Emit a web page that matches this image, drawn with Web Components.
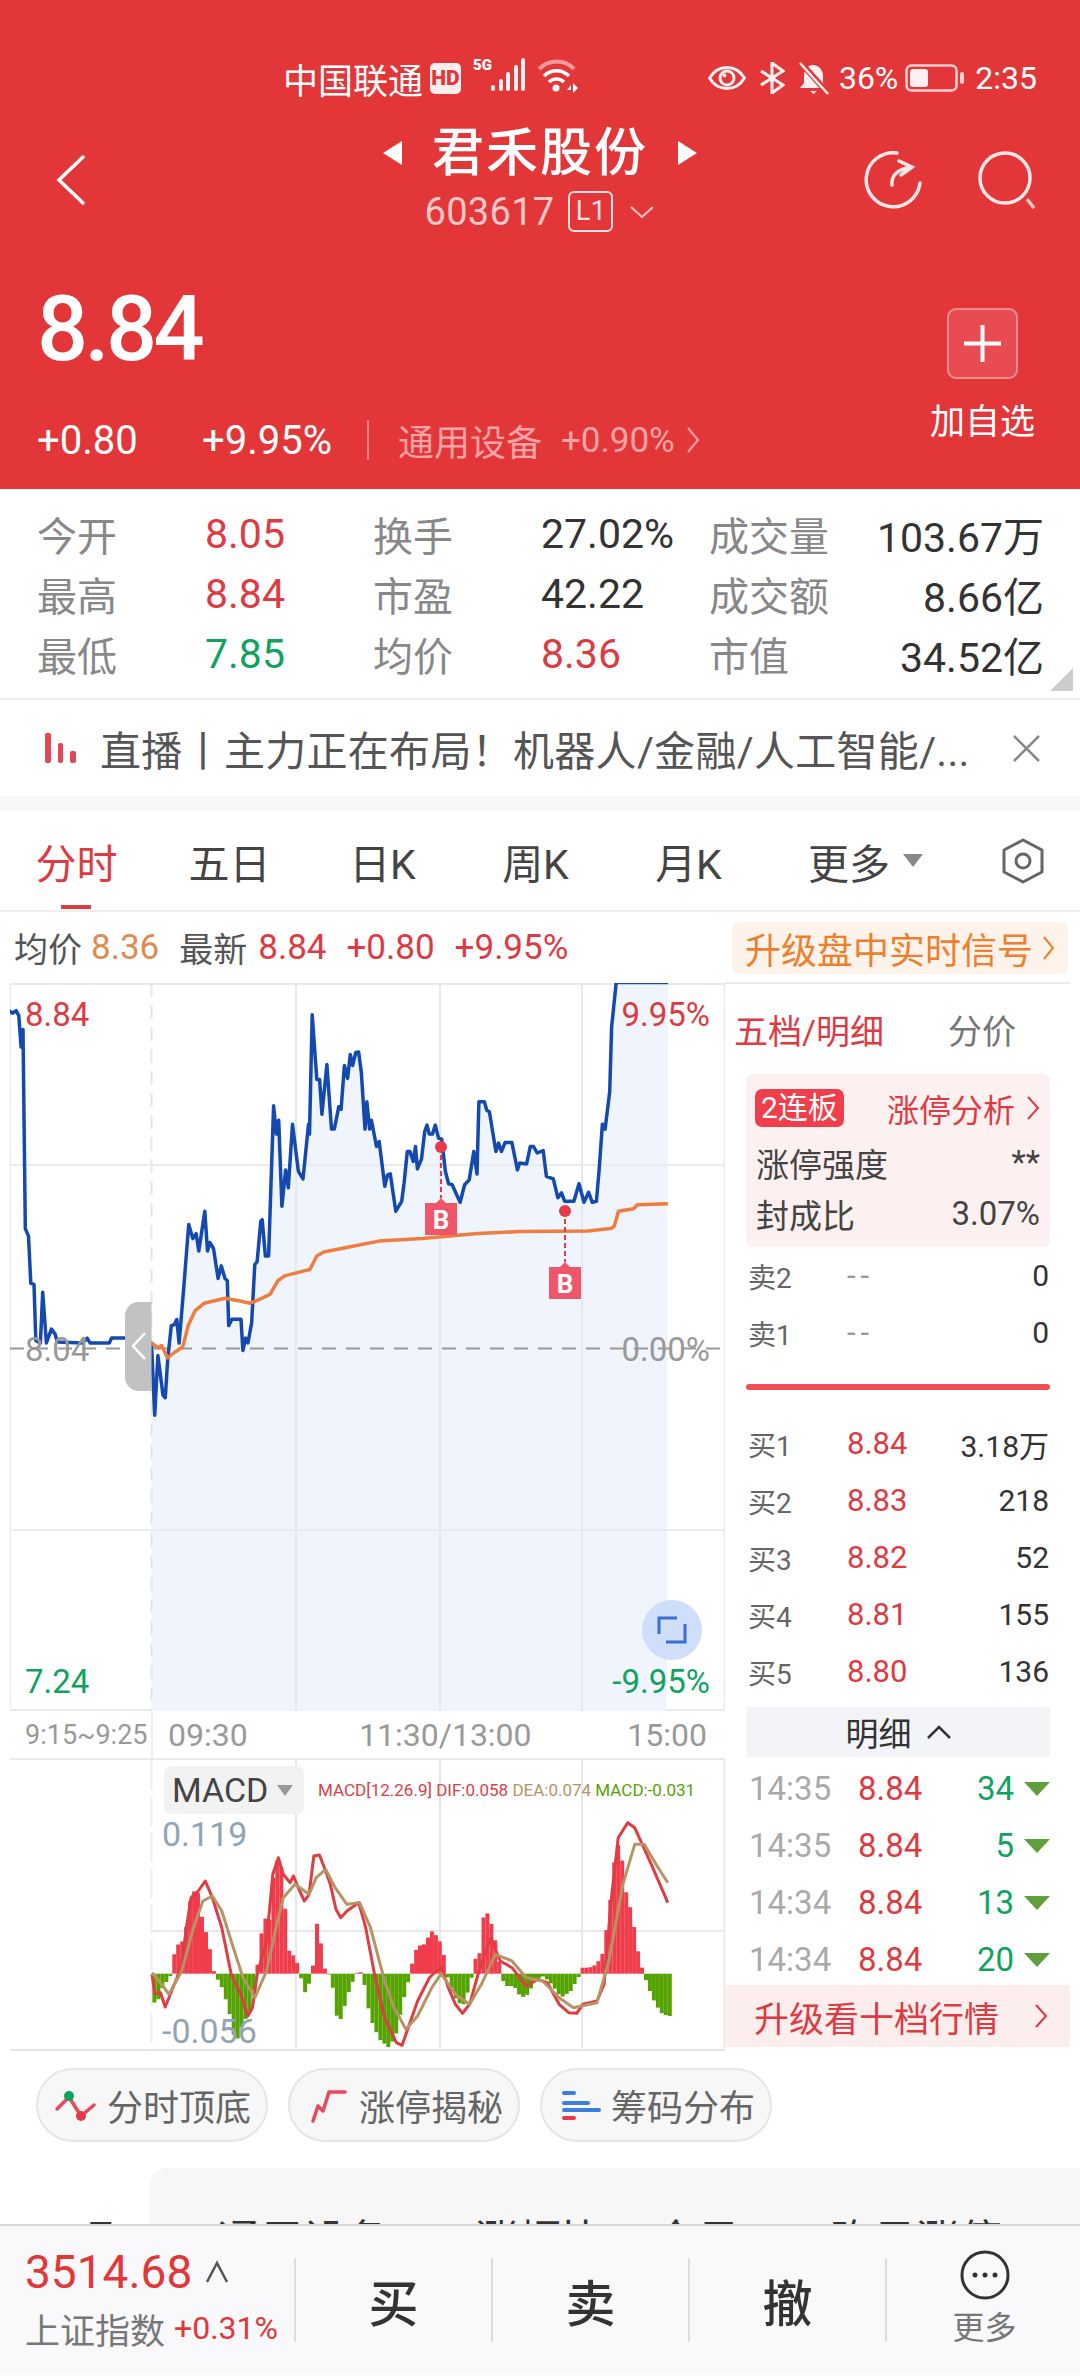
<!DOCTYPE html>
<html lang="zh">
<head>
<meta charset="utf-8">
<title>君禾股份</title>
<style>
html,body{margin:0;padding:0;background:#fff;}
body{width:1080px;height:2376px;overflow:hidden;display:flex;flex-direction:column;font-family:Roboto,"Noto Sans CJK SC",sans-serif;color:#333;}
</style>
</head>
<body>
<stock-header></stock-header>
<stat-grid></stat-grid>
<ad-strip></ad-strip>
<tab-row></tab-row>
<info-row></info-row>
<chart-section></chart-section>
<chip-row>
  <tool-chip icon="turn">分时顶底</tool-chip>
  <tool-chip icon="limit">涨停揭秘</tool-chip>
  <tool-chip icon="chips">筹码分布</tool-chip>
</chip-row>
<peek-card></peek-card>
<bottom-bar></bottom-bar>
<script>
const RED = "#dd3a42", GREEN = "#10a35f";

class Base extends HTMLElement {
    connectedCallback() {
        if (this.shadowRoot) return;
        let root = this.attachShadow({mode: "open"});
        root.innerHTML = `<style>${ this.css() }</style>${ this.html() }`;
    }
    css() { return ":host{display:block}"; }
    html() { return "<slot></slot>"; }
}

class StockHeader extends Base {
    css() { return `
        :host{display:block;height:489px;background:#e23638;color:#fff;}
        .status{height:120px;box-sizing:border-box;padding:36px 43px 0 283px;display:flex;align-items:center;font-size:35px;}
        .status svg{display:block;flex:none;}
        .hd{width:31px;height:31px;background:#fdeeee;border-radius:5px;color:#e23638;font-size:21px;font-weight:900;display:flex;align-items:center;justify-content:center;margin-left:7px;}
        .g5{font-size:15px;font-weight:900;width:18px;align-self:flex-start;margin:20px 0 0 12px;}
        .right{margin-left:auto;display:flex;align-items:center;font-size:32px;}
        .nav{height:120px;display:flex;align-items:center;}
        .side{width:240px;flex:none;display:flex;box-sizing:border-box;}
        .side.l{padding-left:56px;}
        .side.r{justify-content:flex-end;padding-right:43px;gap:54px;}
        .mid{flex:1;display:flex;flex-direction:column;align-items:center;}
        .title{display:flex;align-items:center;font-size:52px;font-weight:500;line-height:75px;margin-top:-12px;letter-spacing:2px;gap:30px;}
        .tri{width:0;height:0;border:12px solid transparent;}
        .tri.a{border-left:0;border-right:19px solid #fff;}
        .tri.b{border-right:0;border-left:19px solid #fff;}
        .code{display:flex;align-items:center;color:#fbc8c8;font-size:38px;line-height:42px;letter-spacing:.3px;}
        .l1{border:2px solid #fde0e0;border-radius:6px;width:41px;height:37px;margin-left:14px;font-size:27px;line-height:37px;text-align:center;color:#fde0e0;}
        .quote{height:249px;display:flex;justify-content:space-between;}
        .price{font-size:90px;line-height:90px;font-weight:500;margin:45px 0 0 37px;letter-spacing:-3.6px;}
        .chg{display:flex;align-items:center;height:50px;margin:40px 0 0 37px;font-size:40px;}
        .chg .a{width:165px;}
        .chg .b{width:165px;}
        .chg i{width:2px;height:40px;background:#ee8487;margin-right:29px;}
        .chg .ind{font-size:36px;color:#fba3a5;width:163px;}
        .chg .pct{font-size:35px;color:#fba3a5;margin-right:11px;}
        .add{display:flex;flex-direction:column;align-items:center;padding-right:45px;}
        .btn{width:71px;height:71px;box-sizing:border-box;margin-top:68px;background:#e94c50;border:2px solid #f08d8e;border-radius:9px;display:flex;align-items:center;justify-content:center;}
        .add span{font-size:35px;line-height:46px;margin-top:21px;}
    `; }
    html() { return `
        <div class="status">
            <span>中国联通</span><span class="hd">HD</span><span class="g5">5G</span>
            <svg width="36" height="40" style="margin-top:-8px" viewBox="0 0 36 40"><g stroke="#fdeeee" stroke-width="4" stroke-linecap="round"><path d="M2 35V33M10 35V27M17 35V20M25 35V13M32 35V6"/></g></svg>
            <svg width="42" height="36" style="margin:-4px 0 0 10px" viewBox="0 0 42 36" fill="none"><path d="M2 11C12 1 28 1 37 11" stroke="#f59a9c" stroke-width="4"/><path d="M7 18C14 11 25 11 32 18" stroke="#fff" stroke-width="3.5"/><path d="M12 24C16 20 23 20 27 24" stroke="#fff" stroke-width="3.5"/><circle cx="19" cy="30" r="3.5" fill="#fff"/><path d="M30 32L34 27V32ZM36 25V35L41 30Z" fill="#fff"/></svg>
            <div class="right">
                <svg width="38" height="26" viewBox="0 0 38 26" fill="none" stroke="#fdf0f0" stroke-width="3"><path d="M1.5 13C10 -1 28 -1 36.5 13C28 27 10 27 1.5 13Z"/><circle cx="19" cy="13" r="7"/><circle cx="16.500" cy="10.500" r="2" fill="#fdf0f0" stroke="none"/></svg>
                <svg width="26" height="32" style="margin-left:13px" viewBox="0 0 26 32" fill="none" stroke="#fdf0f0" stroke-width="3"><path d="M2 9L24 23L13 31V1L24 9L2 23"/></svg>
                <svg width="31" height="33" style="margin-left:13px" viewBox="0 0 31 33"><path d="M15 3C21 3 25 8 25 14V21L29 26H2L6 21V14C6 8 9 3 15 3Z" fill="#fdf0f0"/><path d="M12 29H19L15.500 32Z" fill="#fdf0f0"/><path d="M2 0L30 31" stroke="#e23638" stroke-width="6"/><path d="M2 1L30 32" stroke="#fdf0f0" stroke-width="2.500"/></svg>
                <span style="margin-left:10px">36%</span>
                <svg width="59" height="28" style="margin-left:7px" viewBox="0 0 59 28"><rect x="1.500" y="1.500" width="50" height="25" rx="5" fill="none" stroke="#fbd0d0" stroke-width="2.500"/><rect x="5" y="5" width="18" height="18" rx="3" fill="#fdf0f0"/><rect x="55" y="8" width="4" height="12" rx="2" fill="#fbd0d0"/></svg>
                <span style="margin-left:11px">2:35</span>
            </div>
        </div>
        <div class="nav">
            <div class="side l"><svg width="30" height="50" viewBox="0 0 30 50" fill="none" stroke="#fff" stroke-width="3.500" stroke-linecap="round"><path d="M27 2L3 25L27 48"/></svg></div>
            <div class="mid">
                <div class="title"><span class="tri a"></span><span>君禾股份</span><span class="tri b"></span></div>
                <div class="code"><span>603617</span><span class="l1">L1</span>
                    <svg width="26" height="14" style="margin-left:16px" viewBox="0 0 26 14" fill="none" stroke="#fbc8c8" stroke-width="2"><path d="M2 2L13 12L24 2"/></svg></div>
            </div>
            <div class="side r">
                <svg width="60" height="60" viewBox="0 0 60 60" fill="none" stroke="#fde6e6" stroke-width="3.500" stroke-linecap="round"><path d="M34 3A27 27 0 1 0 57 33"/><path d="M29 35C28 27 33 19 49 17M36 11L49 17L38 25"/></svg>
                <svg width="60" height="60" viewBox="0 0 60 60" fill="none"><circle cx="28" cy="28" r="25" stroke="#fde6e6" stroke-width="3.500"/><path d="M50 49L57 58" stroke="#fbc8c8" stroke-width="3.500"/></svg>
            </div>
        </div>
        <div class="quote">
            <div>
                <div class="price">8.84</div>
                <div class="chg"><span class="a">+0.80</span><span class="b">+9.95%</span><i></i><span class="ind">通用设备</span><span class="pct">+0.90%</span>
                <svg width="14" height="28" viewBox="0 0 14 28" fill="none" stroke="#fba3a5" stroke-width="2"><path d="M2 2L12 14L2 26"/></svg></div>
            </div>
            <div class="add">
                <div class="btn"><svg width="37" height="37" viewBox="0 0 37 37" stroke="#fff" stroke-width="4"><path d="M18.500 0V37M0 18.500H37"/></svg></div>
                <span>加自选</span>
            </div>
        </div>
    `; }
}

class StatGrid extends Base {
    css() { return `
        :host{display:block;position:relative;height:211px;box-sizing:border-box;padding:15px 36px 0 37px;border-bottom:2px solid #eee;background:#fff;}
        .g{display:grid;grid-template-columns:168px 168px 168px 168px 140px 1fr;grid-auto-rows:60px;align-items:center;font-size:41px;white-space:nowrap;}
        .k{color:#888;font-size:40px;} .v{color:#333;} .red{color:${ RED };} .green{color:${ GREEN };}
        .end{text-align:right;}
        .corner{position:absolute;right:7px;bottom:7px;width:0;height:0;border-left:23px solid transparent;border-bottom:23px solid #ccc;}
    `; }
    html() {
        let rows = [
            ["今开", "8.05", "red", "换手", "27.02%", "v", "成交量", "103.67万"],
            ["最高", "8.84", "red", "市盈", "42.22", "v", "成交额", "8.66亿"],
            ["最低", "7.85", "green", "均价", "8.36", "red", "市值", "34.52亿"]
        ];
        return `<div class="g">${ rows.map(r => `
            <span class="k">${ r[0] }</span><span class="${ r[2] }">${ r[1] }</span>
            <span class="k">${ r[3] }</span><span class="${ r[5] }">${ r[4] }</span>
            <span class="k">${ r[6] }</span><span class="v end">${ r[7] }</span>`).join("") }</div>
            <div class="corner"></div>`;
    }
}

class AdStrip extends Base {
    css() { return `
        :host{display:flex;align-items:center;height:111px;box-sizing:border-box;border-bottom:15px solid #f7f7f7;padding:0 40px 0 45px;background:#fff;}
        span{font-size:41px;letter-spacing:.3px;color:#555;margin-left:23px;flex:1;white-space:nowrap;}
    `; }
    html() { return `
        <svg width="32" height="30" viewBox="0 0 32 30" fill="#e04855"><rect width="6" height="30" rx="2"/><rect x="13" y="10" width="5" height="20" rx="2"/><rect x="25" y="18" width="6" height="12" rx="2"/></svg>
        <span>直播丨主力正在布局！机器人/金融/人工智能/...</span>
        <svg width="27" height="27" viewBox="0 0 27 27" fill="none" stroke="#888" stroke-width="2.500"><path d="M1 1L26 26M26 1L1 26"/></svg>
    `; }
}

class TabRow extends Base {
    css() { return `
        :host{display:grid;grid-template-columns:repeat(6,153px) 1fr;align-items:center;height:101px;box-sizing:border-box;border-bottom:2px solid #eee;font-size:41px;color:#444;background:#fff;position:relative;}
        span{text-align:center;}
        .on{color:${ RED };}
        .on::after{content:"";position:absolute;left:61px;bottom:1px;width:30px;height:4px;background:${ RED };}
        .more{display:flex;align-items:center;justify-content:center;margin-left:24px;width:153px;gap:13px;}
        .more i{width:0;height:0;border:10px solid transparent;border-top:13px solid #888;border-bottom:0;}
        svg{justify-self:end;margin-right:35px;}
    `; }
    html() { return `
        <span class="on">分时</span><span>五日</span><span>日K</span><span>周K</span><span>月K</span>
        <span class="more">更多<i></i></span>
        <svg width="44" height="46" viewBox="0 0 44 46" fill="none" stroke="#666" stroke-width="3"><path d="M22 2L41 12V34L22 44L3 34V12Z" stroke-linejoin="round"/><circle cx="22" cy="23" r="7"/></svg>
    `; }
}

class InfoRow extends Base {
    css() { return `
        :host{display:flex;align-items:center;height:71px;padding:0 12px 0 14px;font-size:34px;color:#555;background:#fff;}
        .o{color:#e08a4f;font-size:35px;margin:0 20px 0 9px;}
        .r{color:${ RED };font-size:35px;margin-left:20px;}
        .r.f{margin-left:11px;}
        .btn{margin-left:auto;width:336px;height:52px;box-sizing:border-box;padding-left:13px;background:#fdf3ea;border-radius:6px;color:#ee7f2d;font-size:36px;display:flex;align-items:center;gap:9px;}
    `; }
    html() { return `
        <span>均价</span><span class="o">8.36</span><span>最新</span>
        <span class="r f">8.84</span><span class="r">+0.80</span><span class="r">+9.95%</span>
        <div class="btn"><span>升级盘中实时信号</span><svg width="13" height="26" viewBox="0 0 13 26" fill="none" stroke="#ee7f2d" stroke-width="2"><path d="M2 2L11 13L2 24"/></svg></div>
    `; }
}

const pts = s => s.trim().split(/\s*;\s*/).map(p => p.split(",").map(Number));

class MinuteChart extends Base {
    css() { return `
        :host{display:block;position:relative;height:728px;border-bottom:2px solid #eaeaea;box-sizing:border-box;font-size:33px;}
        svg{display:block;position:absolute;left:0;top:0;}
        span{position:absolute;line-height:36px;}
        .lf{left:15px;} .rt{right:15px;}
    `; }
    html() {
        let X = x => (x / 2.178 - 10).toFixed(1), Y = y => (960 + y / 2.0103 - 983).toFixed(1);
        let line = a => a.map(p => X(p[0]) + "," + Y(p[1])).join(" ");
        let blue = pts(`20,102;27,107;35,102;41,112;46,175;50,140;55,540;62,555;67,650;74,652;78,765;88,770;93,668;101,770;112,742;120,752;125,768;180,770;190,760;196,770;238,770;243,760;300,760;305,770;330,770;337,915;344,795;355,875;360,880;365,805;373,735;380,733;385,723;390,770;400,660;411,532;420,560;427,550;433,585;446,505;452,585;457,568;465,580;475,640;482,615;490,640;495,645;498,735;505,722;525,722;529,785;535,760;540,770;548,730;555,612;560,607;568,525;571,522;578,595;585,595;596,293;602,350;607,322;614,495;622,422;628,458;637,330;650,425;660,440;672,330;674,350;680,110;690,240;696,240;701,310;712,210;722,340;728,340;738,295;743,300;750,212;757,238;763,190;768,212;775,186;781,185;787,225;795,340;799,285;805,340;809,322;820,375;826,365;838,455;844,432;850,430;862,505;875,485;880,450;887,385;893,385;900,405;905,375;909,420;918,400;925,345;930,332;935,350;942,350;948,332;955,358;962,360;970,425;977,450;985,452;1002,487;1012,452;1022,442;1032,385;1039,430;1043,285;1055,285;1060,302;1066,305;1080,385;1086,368;1092,385;1100,367;1115,367;1127,422;1132,408;1147,410;1155,375;1162,375;1170,388;1183,383;1190,435;1205,440;1215,478;1223,468;1230,485;1250,485;1261,450;1272,487;1282,467;1290,487;1299,485;1305,420;1312,330;1318,340;1328,265;1332,135;1342,45;1455,45`);
        let orange = pts(`330,770;345,780;352,775;365,800;378,790;398,778;410,735;425,705;445,690;490,680;520,685;545,690;565,682;588,672;605,645;620,635;675,622;690,595;705,587;760,577;825,565;920,560;1040,550;1130,546;1280,545;1330,540;1338,535;1347,505;1380,500;1388,492;1455,490`);
        let fill = blue.filter(p => p[0] >= 330);
        let marker = (x, dotY, boxY) => `
            <path d="M${ x - 10 } ${ dotY }V${ boxY }" stroke="#e8394a" stroke-width="2" stroke-dasharray="5 3"/>
            <circle cx="${ x - 10 }" cy="${ dotY }" r="6" fill="#e8394a"/>
            <path d="M${ x - 26 } ${ boxY + 5 }H${ x - 15 }L${ x - 10 } ${ boxY }L${ x - 5 } ${ boxY + 5 }H${ x + 6 }V${ boxY + 37 }H${ x - 26 }Z" fill="#f0566a"/>
            <text x="${ x - 10 }" y="${ boxY + 31 }" text-anchor="middle" font-size="26" font-weight="700" fill="#fff">B</text>`;
        return `
        <svg width="715" height="728" viewBox="0 0 715 728" fill="none">
            <path d="M0 1H715M0 727H715" stroke="#eaeaea" stroke-width="2"/>
            <path d="M0 0V728M714.500 0V728" stroke="#eaeaea" stroke-width="2"/>
            <polygon points="${ line(fill) } ${ X(1452) },${ Y(1510) } ${ X(330) },${ Y(1510) }" fill="#eff4fd"/>
            <path d="M141.500 0V728" stroke="#e6e6e6" stroke-width="2" stroke-dasharray="14 8"/>
            <path d="M0 182H715M0 547H715" stroke="#e9ebef" stroke-width="2"/>
            <path d="M286 0V728M430 0V728M572 0V728" stroke="#e4e8f0" stroke-width="2"/>
            <path d="M0 365.500H715" stroke="#999" stroke-width="2" stroke-dasharray="14 10"/>
            <polyline points="${ line(blue) }" stroke="#1449b0" stroke-width="3.500" stroke-linejoin="round"/>
            <polyline points="${ line(orange) }" stroke="#ee7d3f" stroke-width="3.500" stroke-linejoin="round"/>
            ${ marker(441, 164, 215) }
            ${ marker(565, 228, 279) }
            <path d="M141.500 319H129A14 14 0 0 0 115 333V394A14 14 0 0 0 129 408H141.500Z" fill="#c2c2c2"/>
            <path d="M135 350L123 363L135 376" stroke="#fff" stroke-width="2.500"/>
            <circle cx="662" cy="647" r="30" fill="#cfdffa"/>
            <path d="M649 651V635H667M675 641V659H656" stroke="#3a6fd8" stroke-width="3"/>
        </svg>
        <span class="lf" style="top:14px;color:${ RED }">8.84</span>
        <span class="rt" style="top:14px;color:${ RED }">9.95%</span>
        <span class="lf" style="top:349px;color:#999">8.04</span>
        <span class="rt" style="top:349px;color:#999">0.00%</span>
        <span class="lf" style="top:681px;color:${ GREEN }">7.24</span>
        <span class="rt" style="top:681px;color:${ GREEN }">-9.95%</span>`;
    }
}

class AxisRow extends Base {
    css() { return `
        :host{display:flex;align-items:center;height:47px;padding:0 18px 0 15px;font-size:32px;color:#999;position:relative;border-bottom:2px solid #eaeaea;}
        .a{width:143px;font-size:27px;} .b{width:191px;}
        .c{flex:1;}
        :host::before{content:"";position:absolute;left:141px;top:0;bottom:0;width:2px;background:#eee;}
    `; }
    html() { return `<span class="a">9:15~9:25</span><span class="b">09:30</span><span class="c">11:30/13:00</span><span>15:00</span>`; }
}

class MacdChart extends Base {
    css() { return `
        :host{display:block;position:relative;height:291px;border-bottom:2px solid #e4e4e4;box-sizing:border-box;}
        svg{display:block;position:absolute;left:0;top:0;}
        .btn{position:absolute;left:154px;top:6px;width:140px;height:48px;background:#f2f2f2;border-radius:7px;display:flex;align-items:center;box-sizing:border-box;padding-left:8px;font-size:34px;color:#444;}
        .btn i{width:0;height:0;margin-left:9px;border:8px solid transparent;border-top:11px solid #999;border-bottom:0;}
        .leg{position:absolute;left:308px;top:20px;line-height:20px;font-size:17px;white-space:nowrap;}
        .val{position:absolute;left:152px;font-size:34px;line-height:40px;color:#8fa5b5;}
    `; }
    html() {
        let X = x => x / 2.119 - 10, Y = y => 1700 + y / 3 - 1759;
        let env = pts(`322,905;330,900;340,860;360,818;365,760;375,725;385,720;395,640;402,565;410,575;418,575;424,650;430,680;440,740;450,818;455,830;465,855;480,920;495,1030;510,970;525,930;538,830;545,750;555,640;565,680;578,485;590,470;600,620;610,770;620,760;632,818;640,880;650,850;658,825;662,700;668,665;675,720;685,810;692,818;700,850;710,950;720,955;730,890;745,835;750,818;757,808;762,818;768,850;780,950;800,1015;820,1040;835,1000;850,900;865,820;870,780;880,735;895,730;910,690;925,710;935,750;942,818;950,850;965,905;980,910;995,830;1000,770;1010,780;1020,650;1028,635;1040,680;1050,750;1058,818;1065,855;1085,855;1100,890;1115,880;1130,835;1148,825;1165,850;1185,890;1205,870;1225,820;1230,800;1245,800;1260,790;1272,760;1285,650;1300,450;1310,420;1320,560;1335,640;1350,770;1360,818;1370,860;1385,910;1400,940;1415,945`);
        let at = x => {
            for (let i = 1; i < env.length; i++) {
                if (x <= env[i][0]) {
                    let a = env[i - 1], b = env[i];
                    return a[1] + (b[1] - a[1]) * (x - a[0]) / (b[0] - a[0]);
                }
            }
            return env[env.length - 1][1];
        };
        let bars = "";
        for (let x = 323; x < 1416; x += 8.4) {
            let v = at(x), y0 = Y(818), y1 = Y(v);
            bars += `<rect x="${ X(x).toFixed(1) }" width="4" y="${ Math.min(y0, y1).toFixed(1) }" height="${ Math.abs(y1 - y0).toFixed(1) }" fill="${ v < 818 ? "#f13c4b" : "#55a300" }"/>`;
        }
        let dif = pts(`322,820;328,878;340,875;350,918;375,830;385,790;395,680;405,590;420,570;435,540;450,590;470,680;490,820;510,880;525,945;535,920;545,820;565,720;578,520;590,470;600,520;615,545;622,525;635,570;645,600;655,580;665,465;677,462;690,510;700,550;712,625;722,650;735,630;760,605;775,680;795,830;815,950;840,1025;852,1033;865,980;885,900;910,830;935,795;950,860;965,910;980,937;995,910;1015,810;1040,710;1060,780;1085,800;1115,855;1140,835;1160,845;1185,910;1205,935;1222,937;1235,910;1265,900;1280,850;1295,600;1310,410;1330,365;1345,380;1380,490;1415,605`);
        let dea = pts(`322,815;340,845;358,880;385,810;410,680;430,600;450,585;470,630;490,720;515,830;540,890;565,810;585,680;600,590;625,550;655,580;670,530;690,505;710,560;735,610;762,605;785,680;815,840;835,920;860,985;885,945;915,860;935,818;965,880;995,910;1020,850;1050,760;1085,780;1115,830;1150,840;1185,890;1215,920;1265,905;1290,780;1320,550;1345,430;1365,430;1390,490;1415,545`);
        let line = a => a.map(p => X(p[0]).toFixed(1) + "," + Y(p[1]).toFixed(1)).join(" ");
        return `
        <svg width="715" height="291" viewBox="0 0 715 291" fill="none">
            <path d="M141.500 0V291" stroke="#eee" stroke-width="2" stroke-dasharray="30 6"/>
            <path d="M286 0V291M430 0V291M572 0V291M714.500 0V291" stroke="#e8e8e8" stroke-width="2"/>
            <path d="M142 171H715" stroke="#e8e8e8" stroke-width="2"/>
            ${ bars }
            <polyline points="${ line(dif) }" stroke="#df3d43" stroke-width="3" stroke-linejoin="round"/>
            <polyline points="${ line(dea) }" stroke="#b59465" stroke-width="3" stroke-linejoin="round"/>
        </svg>
        <div class="btn">MACD<i></i></div>
        <div class="leg"><span style="color:#d8404a">MACD[12.26.9] DIF:0.058</span> <span style="color:#b59465">DEA:0.074</span> <span style="color:#55a300">MACD:-0.031</span></div>
        <span class="val" style="top:54px">0.119</span>
        <span class="val" style="top:251px">-0.056</span>`;
    }
}

class OrderPanel extends Base {
    css() { return `
        :host{display:block;width:345px;border-top:2px solid #eaeaea;box-sizing:border-box;height:1066px;margin-top:-1px;}
        .tabs{display:flex;height:90px;align-items:center;padding-left:9px;font-size:34px;color:${ RED };}
        .tabs b{font-weight:400;color:#777;margin-left:64px;}
        .in{margin:0 20px 0 21px;}
        .card{height:173px;box-sizing:border-box;padding:15px 10px 0 10px;background:#fdf0f0;border-radius:7px;}
        .card div{display:flex;justify-content:space-between;align-items:center;height:51px;font-size:33px;color:#444;}
        .card div.top{height:38px;margin-bottom:10px;}
        .tag{background:#f03e4b;color:#fff;border-radius:7px;font-size:30px;height:38px;line-height:38px;padding:0 6px;margin-left:-1px;}
        .link{color:${ RED };display:flex;align-items:center;gap:11px;font-size:32px;}
        .row{display:grid;grid-template-columns:99px 1fr auto;padding:0 1px 0 2px;height:57px;align-items:center;font-size:30px;color:#333;}
        .row .k{font-size:28px;color:#666;}
        .row .p{font-size:31px;color:${ RED };}
        .row .d{font-size:31px;color:#999;letter-spacing:5px;}
        .bar{height:6px;background:#f24f55;border-radius:3px;margin:23px 0 25px;}
        .mx{height:50px;margin:7px 0 3px;background:#f2f4f7;display:flex;align-items:center;justify-content:center;gap:15px;font-size:33px;color:#333;}
        .dt{display:grid;grid-template-columns:109px 80px 1fr 36px;height:57px;align-items:center;padding-left:3px;font-size:33px;}
        .dt .t{color:#aaa;} .dt .p{color:${ RED };} .dt .v{color:${ GREEN };text-align:right;}
        .dt i{justify-self:end;width:0;height:0;border:13px solid transparent;border-top:14px solid #5f9f3c;border-bottom:0;}
        .up{height:62px;margin-top:-3px;background:#fdeeee;display:flex;align-items:center;justify-content:space-between;padding:0 22px 0 29px;color:${ RED };font-size:35px;position:relative;}
    `; }
    html() {
        let sell = [["卖2", "0"], ["卖1", "0"]];
        let buy = [["买1", "8.84", "3.18万"], ["买2", "8.83", "218"], ["买3", "8.82", "52"], ["买4", "8.81", "155"], ["买5", "8.80", "136"]];
        let ticks = [["14:35", "34"], ["14:35", "5"], ["14:34", "13"], ["14:34", "20"]];
        return `
        <div class="tabs"><span>五档/明细</span><b>分价</b></div>
        <div class="in">
            <div class="card">
                <div class="top"><span class="tag">2连板</span><span class="link">涨停分析<svg width="14" height="26" viewBox="0 0 14 26" fill="none" stroke="${ RED }" stroke-width="2"><path d="M2 2L12 13L2 24"/></svg></span></div>
                <div><span>涨停强度</span><span>**</span></div>
                <div><span>封成比</span><span>3.07%</span></div>
            </div>
            ${ sell.map(r => `<div class="row"><span class="k">${ r[0] }</span><span class="d">--</span><span>${ r[1] }</span></div>`).join("") }
            <div class="bar"></div>
            ${ buy.map(r => `<div class="row"><span class="k">${ r[0] }</span><span class="p">${ r[1] }</span><span>${ r[2] }</span></div>`).join("") }
            <div class="mx"><span>明细</span><svg width="24" height="14" viewBox="0 0 24 14" fill="none" stroke="#333" stroke-width="2.500"><path d="M1 13L12 2L23 13"/></svg></div>
            ${ ticks.map(r => `<div class="dt"><span class="t">${ r[0] }</span><span class="p">8.84</span><span class="v">${ r[1] }</span><i></i></div>`).join("") }
        </div>
        <div class="up"><span>升级看十档行情</span><svg width="14" height="26" viewBox="0 0 14 26" fill="none" stroke="${ RED }" stroke-width="2"><path d="M2 2L12 13L2 24"/></svg></div>`;
    }
}

class ChartSection extends Base {
    css() { return `
        :host{display:flex;height:1066px;padding-left:10px;}
        .left{width:715px;flex:none;}
    `; }
    html() { return `
        <div class="left"><minute-chart></minute-chart><axis-row></axis-row><macd-chart></macd-chart></div>
        <order-panel></order-panel>`; }
}

class ChipRow extends Base {
    css() { return `:host{display:flex;gap:20px;height:119px;box-sizing:border-box;padding:19px 0 0 36px;}`; }
}

class ToolChip extends Base {
    css() { return `
        :host{display:flex;align-items:center;gap:10px;width:232px;height:74px;box-sizing:border-box;padding-left:15px;background:#f7f7f7;border:2px solid #e5e5e5;border-radius:37px;font-size:36px;color:#666;}
        svg{flex:none;}
    `; }
    html() {
        let icons = {
            turn: `<path d="M4 24L16 12L28 31L41 20" fill="none" stroke="#e8485a" stroke-width="3.500" stroke-linecap="round"/><circle cx="16" cy="11" r="5" fill="#10a35f"/><circle cx="28" cy="31" r="5" fill="#e8394a"/>`,
            limit: `<path d="M8 36L13 21L18 26L24 7H40" fill="none" stroke="#e8485a" stroke-width="3.500" stroke-linecap="round" stroke-linejoin="round"/>`,
            chips: `<path d="M7 8H17M7 18H31M7 25H42" fill="none" stroke="#3b7fe0" stroke-width="4" stroke-linecap="round"/><path d="M7 33H17" stroke="#e8394a" stroke-width="4" stroke-linecap="round"/>`
        };
        return `<svg width="44" height="40" viewBox="0 0 44 40">${ icons[this.getAttribute("icon")] }</svg><slot></slot>`;
    }
}

class PeekCard extends Base {
    css() { return `
        :host{display:flex;height:56px;overflow:hidden;font-size:43px;color:#333;background:#fff;}
        .m{width:150px;box-sizing:border-box;padding:49px 0 0 45px;line-height:40px;font-size:34px;}
        .c{flex:1;background:#f7f7f7;border-top-left-radius:16px;display:flex;padding:48px 0 0 67px;line-height:50px;}
        .c span:nth-child(2){margin-left:86px;} .c span:nth-child(3){margin-left:50px;} .c span:nth-child(4){margin-left:90px;}
    `; }
    html() { return `<div class="m">11月</div><div class="c"><span>通用设备</span><span>涨幅比</span><span>今日</span><span>昨日涨停</span></div>`; }
}

class BottomBar extends Base {
    css() { return `
        :host{display:flex;align-items:flex-start;height:151px;box-sizing:border-box;border-top:2px solid #d8d8dc;background:#f9f9fb;padding-top:32px;}
        .idx{width:269px;height:84px;padding-left:25px;display:flex;flex-direction:column;justify-content:center;flex:none;}
        .idx div{height:56px;display:flex;align-items:center;flex:none;}
        .num{font-size:46px;color:#e23638;}
        .name{font-size:35px;color:#777;}
        .pct{font-size:32px;color:#e23638;margin-left:9px;}
        .cell{width:195px;height:84px;flex:none;border-left:2px solid #ddd;display:flex;flex-direction:column;align-items:center;justify-content:center;font-size:50px;font-weight:500;color:#333;}
        .more{font-size:32px;font-weight:400;color:#777;gap:6px;}
        .more svg{flex:none;}
        .more span{line-height:44px;flex:none;}
    `; }
    html() { return `
        <div class="idx">
            <div><span class="num">3514.68</span><svg style="margin-left:13px" width="24" height="24" viewBox="0 0 24 24" fill="none" stroke="#555" stroke-width="2.500"><path d="M2 22L12 3L22 22"/></svg></div>
            <div><span class="name">上证指数</span><span class="pct">+0.31%</span></div>
        </div>
        <div class="cell">买</div><div class="cell">卖</div><div class="cell">撤</div>
        <div class="cell more">
            <svg width="50" height="50" viewBox="0 0 50 50" fill="none"><circle cx="25" cy="25" r="23" stroke="#333" stroke-width="3"/><circle cx="15" cy="25" r="2.500" fill="#333"/><circle cx="25" cy="25" r="2.500" fill="#333"/><circle cx="35" cy="25" r="2.500" fill="#333"/></svg>
            <span>更多</span>
        </div>`; }
}

customElements.define("stock-header", StockHeader);
customElements.define("stat-grid", StatGrid);
customElements.define("ad-strip", AdStrip);
customElements.define("tab-row", TabRow);
customElements.define("info-row", InfoRow);
customElements.define("minute-chart", MinuteChart);
customElements.define("axis-row", AxisRow);
customElements.define("macd-chart", MacdChart);
customElements.define("order-panel", OrderPanel);
customElements.define("chart-section", ChartSection);
customElements.define("chip-row", ChipRow);
customElements.define("tool-chip", ToolChip);
customElements.define("peek-card", PeekCard);
customElements.define("bottom-bar", BottomBar);
</script>
</body>
</html>
